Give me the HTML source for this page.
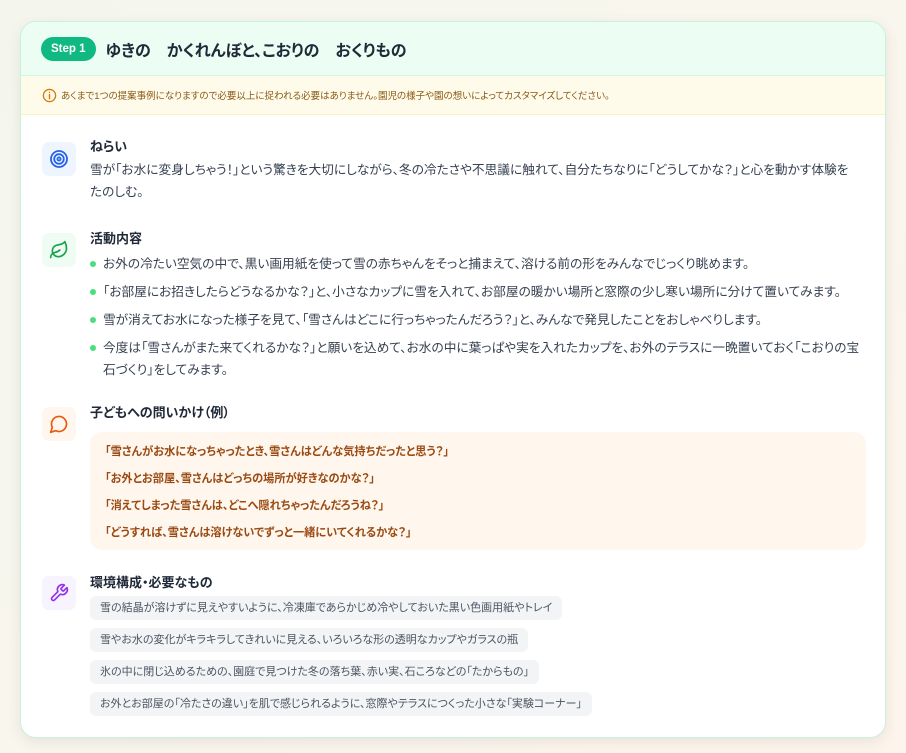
<!DOCTYPE html>
<html><head><meta charset="utf-8"><style>
*{box-sizing:border-box;margin:0;padding:0}
body{width:906px;height:753px;background:linear-gradient(135deg,#f4f6ee,#fdf5ec);font-family:"Liberation Sans","Noto Sans CJK JP",sans-serif;font-feature-settings:"palt";color:#374151;overflow:hidden;position:relative}
.card{position:absolute;left:20px;top:21px;width:866px;height:717px;background:#fff;border-radius:16px;border:1px solid #c9f1dc;box-shadow:0 4px 14px rgba(0,0,0,.08);overflow:hidden}
.hd{height:54px;background:#ecfdf4;display:flex;align-items:center;padding-left:20px;border-bottom:1px solid #d5f5e3}
.badge{background:#10b981;color:#fff;font-weight:bold;font-size:11.5px;height:24px;line-height:24px;padding:0 10px;border-radius:12px;margin-right:10px}
.ttl{font-size:16px;font-weight:bold;color:#1f2937}
.note{height:39px;background:#fffbeb;border-bottom:1px solid #fdf0c0;display:flex;align-items:center;padding-left:21px;font-size:9.5px;color:#8a5a14}
.note svg{margin-right:4px}
.sec{position:absolute;left:21px}
.ic{position:absolute;left:0;top:0;width:34px;height:34px;border-radius:7px;display:flex;align-items:center;justify-content:center}
.ct{position:absolute;left:48px;width:776px}
h3{font-size:13px;font-weight:bold;color:#1f2937;line-height:20px}
p{font-size:12.7px;line-height:22px}
ul{list-style:none}
li{font-size:12.7px;line-height:22px;position:relative;padding-left:13px;margin-bottom:6px}
li:before{content:"";position:absolute;left:0;top:8px;width:6px;height:6px;border-radius:50%;background:#4ade80}
.qb{background:#fff6ed;border-radius:12px;width:776px;height:118px;margin-top:9px;padding:7px 14px 7px 15px;}
.qb div{font-size:11.2px;font-weight:bold;color:#9a4a12;line-height:27px}
.chip{display:inline-block;background:#f3f4f6;border-radius:6px;font-size:11px;height:24px;line-height:24px;padding:0 10px;margin-top:8px;color:#4b5563}
</style></head><body>
<div class="card">
<div class="hd"><span class="badge">Step 1</span><span class="ttl">ゆきの　かくれんぼと、こおりの　おくりもの</span></div>
<div class="note"><svg width="15" height="15" viewBox="0 0 16 16"><circle cx="8" cy="8" r="6.5" fill="none" stroke="#d97706" stroke-width="1.4"/><path d="M8 7v4.5M8 4.6v.1" stroke="#d97706" stroke-width="1.5" stroke-linecap="round"/></svg>あくまで1つの提案事例になりますので必要以上に捉われる必要はありません。園児の様子や園の想いによってカスタマイズしてください。</div>

<div class="sec" style="top:120px">
<div class="ic" style="background:#eff5ff"><svg width="20" height="20" viewBox="0 0 20 20" fill="none" stroke="#2563eb" stroke-width="1.8"><circle cx="10" cy="10" r="8"/><circle cx="10" cy="10" r="4.8"/><circle cx="10" cy="10" r="1.6"/></svg></div>
<div class="ct" style="top:-5px"><h3>ねらい</h3><p style="margin-top:2px">雪が「お水に変身しちゃう！」という驚きを大切にしながら、冬の冷たさや不思議に触れて、自分たちなりに「どうしてかな？」と心を動かす体験を<br>たのしむ。</p></div>
</div>

<div class="sec" style="top:211px">
<div class="ic" style="background:#effcf4"><svg width="20" height="20" viewBox="0 0 24 24" fill="none" stroke="#16a34a" stroke-width="2" stroke-linecap="round" stroke-linejoin="round"><path d="M11 20A7 7 0 0 1 9.8 6.1C15.5 5 17 4.5 19 2c1 2 2 4.2 2 8 0 5.5-4.8 10-10 10Z"/><path d="M2 21c0-3 1.9-5.4 5.2-6.1C9.5 14.4 12 13 13 12"/></svg></div>
<div class="ct" style="top:-4px"><h3>活動内容</h3><ul style="margin-top:4px">
<li>お外の冷たい空気の中で、黒い画用紙を使って雪の赤ちゃんをそっと捕まえて、溶ける前の形をみんなでじっくり眺めます。</li>
<li>「お部屋にお招きしたらどうなるかな？」と、小さなカップに雪を入れて、お部屋の暖かい場所と窓際の少し寒い場所に分けて置いてみます。</li>
<li>雪が消えてお水になった様子を見て、「雪さんはどこに行っちゃったんだろう？」と、みんなで発見したことをおしゃべりします。</li>
<li>今度は「雪さんがまた来てくれるかな？」と願いを込めて、お水の中に葉っぱや実を入れたカップを、お外のテラスに一晩置いておく「こおりの宝<br>石づくり」をしてみます。</li></ul></div>
</div>

<div class="sec" style="top:385px">
<div class="ic" style="background:#fff6ed"><svg width="20" height="20" viewBox="0 0 24 24" fill="none" stroke="#ea580c" stroke-width="2" stroke-linecap="round" stroke-linejoin="round"><path d="M7.9 20A9 9 0 1 0 4 16.1L2 22Z"/></svg></div>
<div class="ct" style="top:-4px"><h3>子どもへの問いかけ（例）</h3>
<div class="qb"><div>「雪さんがお水になっちゃったとき、雪さんはどんな気持ちだったと思う？」</div><div>「お外とお部屋、雪さんはどっちの場所が好きなのかな？」</div><div>「消えてしまった雪さんは、どこへ隠れちゃったんだろうね？」</div><div>「どうすれば、雪さんは溶けないでずっと一緒にいてくれるかな？」</div></div></div>
</div>

<div class="sec" style="top:554px">
<div class="ic" style="background:#f7f3ff"><svg width="20" height="20" viewBox="0 0 24 24" fill="none" stroke="#9333ea" stroke-width="2" stroke-linecap="round" stroke-linejoin="round"><path d="M14.7 6.3a1 1 0 0 0 0 1.4l1.6 1.6a1 1 0 0 0 1.4 0l3.8-3.8a6 6 0 0 1-7.9 7.9l-6.9 6.9a2.1 2.1 0 0 1-3-3l6.9-6.9a6 6 0 0 1 7.9-7.9Z"/></svg></div>
<div class="ct" style="top:-3px"><h3>環境構成・必要なもの</h3>
<div><span class="chip" style="margin-top:3px">雪の結晶が溶けずに見えやすいように、冷凍庫であらかじめ冷やしておいた黒い色画用紙やトレイ</span></div>
<div><span class="chip">雪やお水の変化がキラキラしてきれいに見える、いろいろな形の透明なカップやガラスの瓶</span></div>
<div><span class="chip">氷の中に閉じ込めるための、園庭で見つけた冬の落ち葉、赤い実、石ころなどの「たからもの」</span></div>
<div><span class="chip">お外とお部屋の「冷たさの違い」を肌で感じられるように、窓際やテラスにつくった小さな「実験コーナー」</span></div>
</div></div>
</div>
</body></html>
